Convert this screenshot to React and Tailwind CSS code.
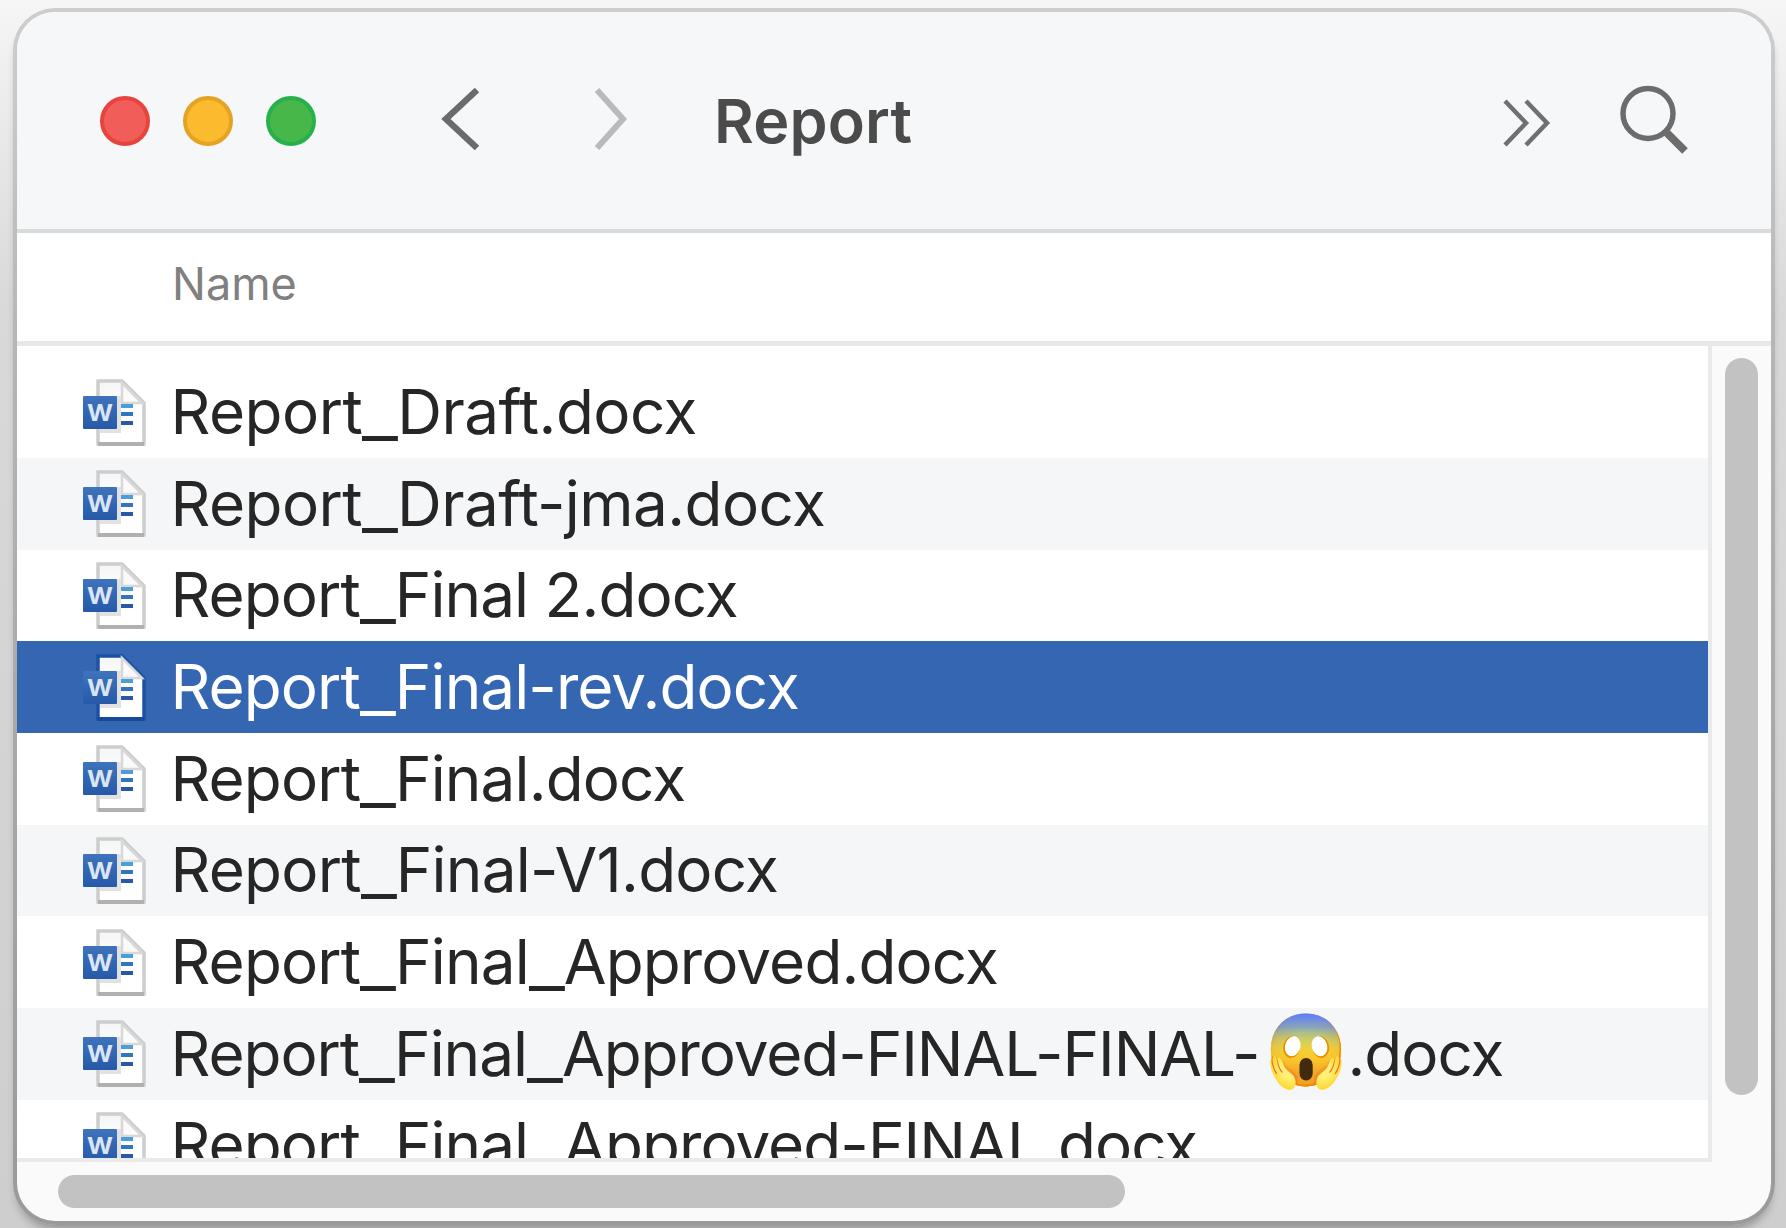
const files = [
  { name: "Report_Draft.docx", tracking: "tracking-[-0.53px]" },
  { name: "Report_Draft-jma.docx", tracking: "tracking-[-0.57px]" },
  { name: "Report_Final 2.docx", tracking: "tracking-[-0.94px]" },
  { name: "Report_Final-rev.docx", tracking: "tracking-[-0.92px]", selected: true },
  { name: "Report_Final.docx", tracking: "tracking-[-0.89px]" },
  { name: "Report_Final-V1.docx", tracking: "tracking-[-0.77px]" },
  { name: "Report_Final_Approved.docx", tracking: "tracking-[-0.88px]" },
  { name: "Report_Final_Approved-FINAL-FINAL-", emoji: "😱", ext: ".docx", tracking: "tracking-[-1.05px]" },
  { name: "Report_Final_Approved-FINAL.docx", tracking: "tracking-[-0.94px]" },
];

function WordIcon({ selected }) {
  return (
    <svg width="64" height="68" viewBox="0 0 64 68" className="mt-[1px] block shrink-0">
      <defs>
        <linearGradient id="badge" x1="0" y1="0" x2="0" y2="1">
          <stop offset="0" stopColor="#3f73bc" />
          <stop offset="1" stopColor="#265aa9" />
        </linearGradient>
        <linearGradient id="paper" x1="0" y1="0" x2="0" y2="1">
          <stop offset="0" stopColor="#f4f5f6" />
          <stop offset="0.45" stopColor="#ffffff" />
        </linearGradient>
      </defs>
      <path d="M15 2H39L61 24V65H15Z" fill="url(#paper)" stroke={selected ? "#1c52a3" : "#cdcdcd"} strokeWidth="3.5" />
      <path d="M15 65H61" stroke={selected ? "#154a9b" : "#b0b0b0"} strokeWidth="4" />
      <path d="M39 4L59 24H39Z" fill="#fafafa" stroke="#d8d8d8" strokeWidth="2.5" />
      <path d="M17 52H36V17" fill="none" stroke="#e2e2e2" strokeWidth="4" />
      <path d="M38 27H50" stroke="#4a9fd9" strokeWidth="4" />
      <path d="M38 35H50" stroke="#3277bd" strokeWidth="4" />
      <path d="M38 44H50" stroke="#2a58a4" strokeWidth="4" />
      <rect x="0" y="17" width="34" height="33" rx="1" fill="url(#badge)" />
      <text x="4" y="41.5" textLength="26" lengthAdjust="spacingAndGlyphs" fontFamily="Inter, sans-serif" fontWeight="700" fontSize="22.5" fill="#dbe5f3">W</text>
    </svg>
  );
}

function FileName({ text }) {
  return (
    <span>
      {text.split(/(_)/).map((part, i) =>
        part === "_" ? (
          <span key={i} className="inline-block w-[35px] origin-left translate-y-[2px] scale-x-[1.27]">_</span>
        ) : (
          part
        )
      )}
    </span>
  );
}

function FileRow({ file, striped }) {
  const tone = file.selected
    ? "bg-[#3566b1] text-white"
    : striped
      ? "bg-[#f5f6f8] text-[#262626]"
      : "bg-white text-[#262626]";
  return (
    <li className={`flex h-[91.65px] shrink-0 items-center pl-[66px] ${tone}`}>
      <WordIcon selected={file.selected} />
      <span className={`ml-[23.5px] flex items-center text-[62px] leading-[80px] whitespace-pre ${file.tracking}`}>
        <FileName text={file.name} />
        {file.emoji && <span className="ml-[4px] w-[84px] -translate-y-[4.5px] scale-y-[1.08] text-center text-[66px] leading-[80px]">{file.emoji}</span>}
        {file.ext && <span className="tracking-[-1px]">{file.ext}</span>}
      </span>
    </li>
  );
}

export default function App() {
  return (
    <div className="h-[1228px] w-[1786px] overflow-hidden bg-linear-to-b from-[#f6f6f6] via-[#d9d9d9] via-25% to-[#cecece] pt-[8px] pl-[13px] font-['Inter',sans-serif]">
      <div className="h-[1217px] w-[1762px] rounded-[42px] bg-linear-to-b from-[#cecece] via-[#b2b5b3] via-30% to-[#989b99] p-[4px] shadow-[0_8px_10px_-4px_rgba(0,0,0,0.3)]">
        <div className="flex h-full flex-col overflow-hidden rounded-[38px] bg-[#fafafa]">
          <header className="flex h-[221px] shrink-0 items-center border-b-4 border-[#d8dadc] bg-[#f5f7f9] pl-[83px]">
            <div className="flex gap-[33px]">
              <span className="size-[50px] rounded-full border-4 border-[#e8433c] bg-[#f15e5a]" />
              <span className="size-[50px] rounded-full border-4 border-[#e5a325] bg-[#fcbb2e]" />
              <span className="size-[50px] rounded-full border-4 border-[#27b04b] bg-[#48b749]" />
            </div>
            <svg className="ml-[124px] shrink-0" width="40" height="68" viewBox="0 0 40 68" fill="none" stroke="#6b6b6b" strokeWidth="6.5">
              <path d="M37 3L6 32L37 61" />
            </svg>
            <svg className="ml-[114px] shrink-0" width="34" height="68" viewBox="0 0 34 68" fill="none" stroke="#b9bbbb" strokeWidth="6">
              <path d="M3 3L29 32L3 61" />
            </svg>
            <h1 className="ml-[86px] text-[61px] leading-[80px] font-semibold tracking-[0.2px] text-[#4b4b4b]">Report</h1>
            <div className="mr-[83px] ml-auto flex items-center gap-[69px]">
              <svg className="mt-[5px]" width="48" height="48" viewBox="0 0 48 48" fill="none" stroke="#707070" strokeWidth="4.5">
                <path d="M2 2L23 24L2 46M23 2L44 24L23 46" />
              </svg>
              <svg className="-mt-[1px]" width="68" height="70" viewBox="0 0 68 70" fill="none" stroke="#6c6c6c">
                <circle cx="28" cy="28.5" r="25" strokeWidth="5.5" />
                <path d="M45 46L65 66" strokeWidth="8" />
              </svg>
            </div>
          </header>
          <div className="flex h-[113px] shrink-0 items-center border-b-[5px] border-[#e6e8ea] bg-white pb-[7px] pl-[155px] text-[45px] leading-[60px] text-[#808080]">Name</div>
          <div className="flex h-[812px] shrink-0">
            <ul className="flex h-full w-[1691px] flex-col overflow-hidden bg-white pt-[20.4px]">
              {files.map((file, i) => (
                <FileRow key={file.name} file={file} striped={i % 2 === 1} />
              ))}
            </ul>
            <div className="flex-1 border-l-4 border-[#e8ebea] pt-[12px] pl-[13px]">
              <div className="h-[737px] w-[33px] rounded-full bg-[#c2c2c2]" />
            </div>
          </div>
          <div className="flex flex-1 flex-col">
            <div className="h-[4px] w-[1695px] bg-[#e8ebea]" />
            <div className="mt-[13px] ml-[41px] h-[33px] w-[1067px] rounded-full bg-[#c2c2c2]" />
          </div>
        </div>
      </div>
    </div>
  );
}
